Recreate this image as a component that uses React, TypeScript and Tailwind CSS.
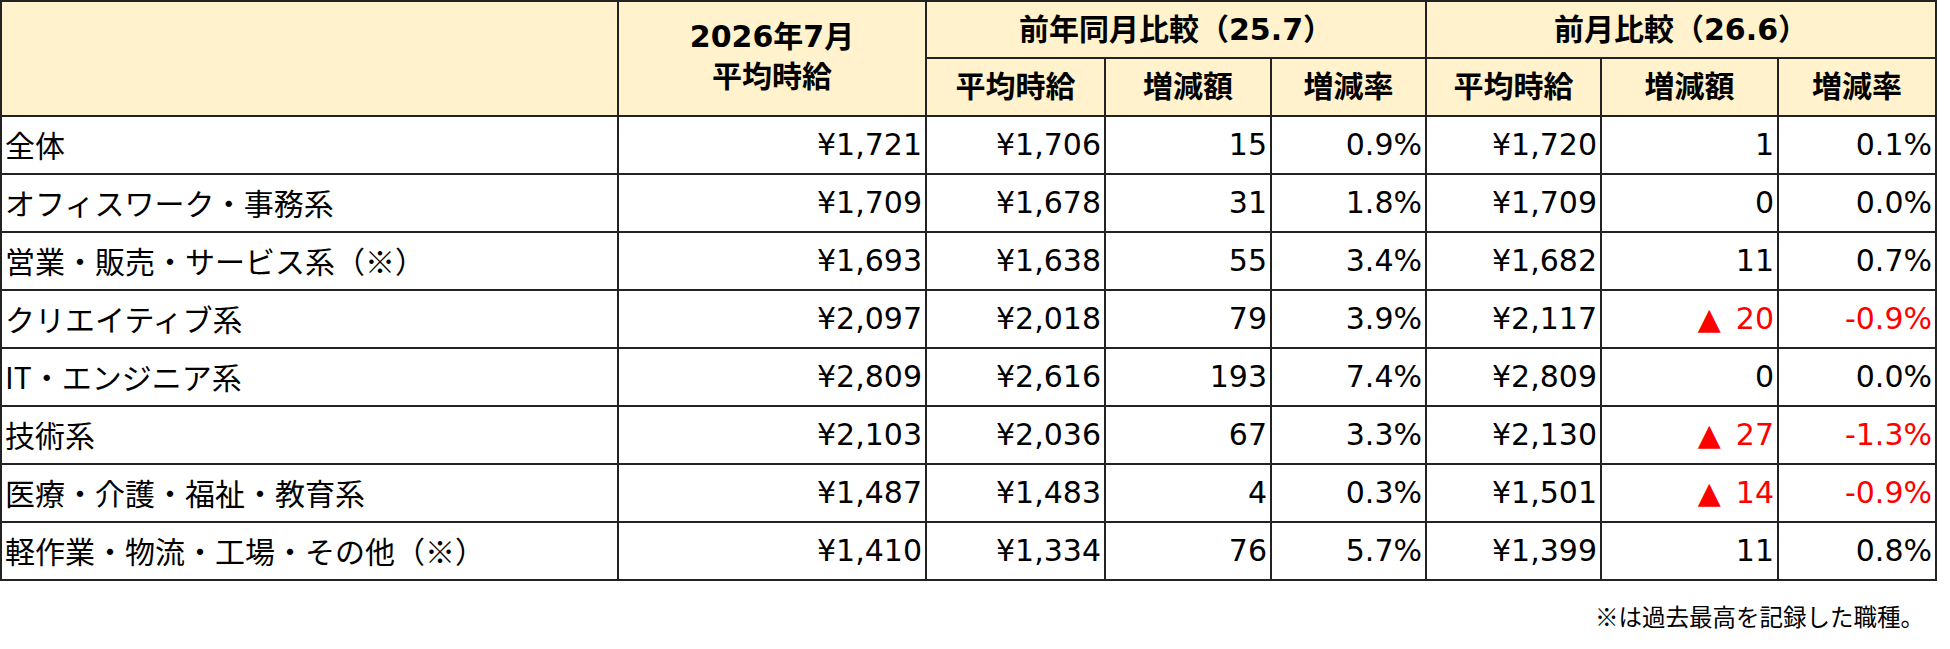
const num = "font-['DejaVu_Sans','Noto_Sans_CJK_JP',sans-serif]";
const jp = "font-['Noto_Sans_CJK_JP',sans-serif]";

type Row = {
  label: string;
  cur: string;
  yoyAvg: string;
  yoyDiff: string;
  yoyRate: string;
  momAvg: string;
  momDiff: string;
  momRate: string;
  down?: boolean;
};

const rows: Row[] = [
  { label: "全体", cur: "¥1,721", yoyAvg: "¥1,706", yoyDiff: "15", yoyRate: "0.9%", momAvg: "¥1,720", momDiff: "1", momRate: "0.1%" },
  { label: "オフィスワーク・事務系", cur: "¥1,709", yoyAvg: "¥1,678", yoyDiff: "31", yoyRate: "1.8%", momAvg: "¥1,709", momDiff: "0", momRate: "0.0%" },
  { label: "営業・販売・サービス系（※）", cur: "¥1,693", yoyAvg: "¥1,638", yoyDiff: "55", yoyRate: "3.4%", momAvg: "¥1,682", momDiff: "11", momRate: "0.7%" },
  { label: "クリエイティブ系", cur: "¥2,097", yoyAvg: "¥2,018", yoyDiff: "79", yoyRate: "3.9%", momAvg: "¥2,117", momDiff: "20", momRate: "-0.9%", down: true },
  { label: "IT・エンジニア系", cur: "¥2,809", yoyAvg: "¥2,616", yoyDiff: "193", yoyRate: "7.4%", momAvg: "¥2,809", momDiff: "0", momRate: "0.0%" },
  { label: "技術系", cur: "¥2,103", yoyAvg: "¥2,036", yoyDiff: "67", yoyRate: "3.3%", momAvg: "¥2,130", momDiff: "27", momRate: "-1.3%", down: true },
  { label: "医療・介護・福祉・教育系", cur: "¥1,487", yoyAvg: "¥1,483", yoyDiff: "4", yoyRate: "0.3%", momAvg: "¥1,501", momDiff: "14", momRate: "-0.9%", down: true },
  { label: "軽作業・物流・工場・その他（※）", cur: "¥1,410", yoyAvg: "¥1,334", yoyDiff: "76", yoyRate: "5.7%", momAvg: "¥1,399", momDiff: "11", momRate: "0.8%" },
];

const cell = "border-r-2 border-b-2 border-[#222] flex items-center";
const head = `${cell} bg-[#fff2cc] justify-center font-bold text-black ${num}`;

function NumCell({ value, red, triangle }: { value: string; red?: boolean; triangle?: boolean }) {
  return (
    <div className={`${cell} justify-end pr-[3px] ${num} ${red ? "text-[#ff0000]" : "text-black"}`}>
      {triangle && <span className="mr-[15px]">▲</span>}
      <span>{value}</span>
    </div>
  );
}

export default function App() {
  return (
    <div className="bg-white min-h-[649px] w-[1950px] text-[30px] leading-none">
      <div className="inline-grid grid-cols-[617px_308px_179px_166px_155px_175px_177px_158px] grid-rows-[57px_58px_repeat(8,58px)] border-t-2 border-l-2 border-[#222]">
        <div className={`${cell} row-span-2 bg-[#fff2cc]`} />
        <div className={`${head} row-span-2 flex-col leading-[40px] pb-[4px]`}>
          <span>2026年7月</span>
          <span>平均時給</span>
        </div>
        <div className={`${head} col-span-3`}>前年同月比較（25.7）</div>
        <div className={`${head} col-span-3`}>前月比較（26.6）</div>
        <div className={head}>平均時給</div>
        <div className={head}>増減額</div>
        <div className={head}>増減率</div>
        <div className={head}>平均時給</div>
        <div className={head}>増減額</div>
        <div className={head}>増減率</div>

        {rows.map((r) => (
          <div key={r.label} className="contents">
            <div className={`${cell} pl-[3px] pb-[2px] text-black ${jp}`}>{r.label}</div>
            <NumCell value={r.cur} />
            <NumCell value={r.yoyAvg} />
            <NumCell value={r.yoyDiff} />
            <NumCell value={r.yoyRate} />
            <NumCell value={r.momAvg} />
            <NumCell value={r.momDiff} red={r.down} triangle={r.down} />
            <NumCell value={r.momRate} red={r.down} />
          </div>
        ))}
      </div>
      <div className={`w-[1937px] mt-[20px] pr-[13px] text-right text-[23.5px] leading-[30px] text-black ${jp}`}>
        ※は過去最高を記録した職種。
      </div>
    </div>
  );
}
